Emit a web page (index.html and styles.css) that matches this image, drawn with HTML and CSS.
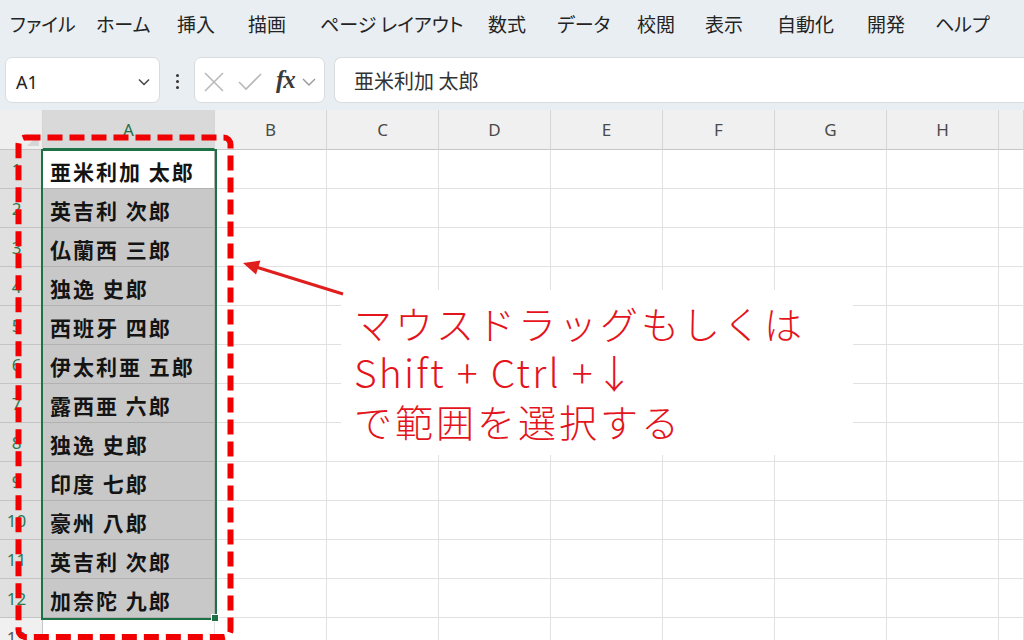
FILE: index.html
```html
<!DOCTYPE html>
<html lang="ja">
<head>
<meta charset="utf-8">
<title>Excel</title>
<link rel="stylesheet" href="styles.css">
</head>
<body>
<div class="app">
  <nav class="menu">
    <span class="m1">ファイル</span><span class="m2">ホーム</span><span class="m3">挿入</span><span class="m4">描画</span><span class="m5">ページ レイアウト</span><span class="m6">数式</span><span class="m7">データ</span><span class="m8">校閲</span><span class="m9">表示</span><span class="m10">自動化</span><span class="m11">開発</span><span>ヘルプ</span>
  </nav>
  <div class="fbar">
    <div class="namebox">
      <span class="nb-text">A1</span>
      <svg class="chev" width="12" height="8" viewBox="0 0 12 8"><path d="M1 1.5 L6 6.5 L11 1.5" fill="none" stroke="#444" stroke-width="1.5"/></svg>
    </div>
    <div class="dots"><i></i><i></i><i></i></div>
    <div class="fxbox">
      <svg width="22" height="22" viewBox="0 0 22 22"><path d="M2 2 L20 20 M20 2 L2 20" stroke="#b9b9b9" stroke-width="1.6" fill="none"/></svg>
      <svg width="26" height="22" viewBox="0 0 26 22"><path d="M2 11 L9 18 L24 3" stroke="#b9b9b9" stroke-width="1.6" fill="none"/></svg>
      <span class="fx">fx</span>
      <svg class="fxchev" width="14" height="8" viewBox="0 0 14 8"><path d="M1 1 L7 7 L13 1" fill="none" stroke="#999" stroke-width="1.4"/></svg>
    </div>
    <div class="finput">亜米利加 太郎</div>
  </div>
  <div class="sheet">
    <div class="grid">
      <div class="corner"><svg width="12" height="12" viewBox="0 0 12 12"><path d="M12 0 L12 12 L0 12 Z" fill="#d6d6d6"/></svg></div>
      <div class="ch sel">A</div><div class="ch">B</div><div class="ch">C</div><div class="ch">D</div><div class="ch">E</div><div class="ch">F</div><div class="ch">G</div><div class="ch">H</div><div class="ch"></div>

      <div class="rh sel">1</div><div class="c a active">亜米利加 太郎</div><div class="c"></div><div class="c"></div><div class="c"></div><div class="c"></div><div class="c"></div><div class="c"></div><div class="c"></div><div class="c"></div>
      <div class="rh sel">2</div><div class="c a">英吉利 次郎</div><div class="c"></div><div class="c"></div><div class="c"></div><div class="c"></div><div class="c"></div><div class="c"></div><div class="c"></div><div class="c"></div>
      <div class="rh sel">3</div><div class="c a">仏蘭西 三郎</div><div class="c"></div><div class="c"></div><div class="c"></div><div class="c"></div><div class="c"></div><div class="c"></div><div class="c"></div><div class="c"></div>
      <div class="rh sel">4</div><div class="c a">独逸 史郎</div><div class="c"></div><div class="c"></div><div class="c"></div><div class="c"></div><div class="c"></div><div class="c"></div><div class="c"></div><div class="c"></div>
      <div class="rh sel">5</div><div class="c a">西班牙 四郎</div><div class="c"></div><div class="c"></div><div class="c"></div><div class="c"></div><div class="c"></div><div class="c"></div><div class="c"></div><div class="c"></div>
      <div class="rh sel">6</div><div class="c a">伊太利亜 五郎</div><div class="c"></div><div class="c"></div><div class="c"></div><div class="c"></div><div class="c"></div><div class="c"></div><div class="c"></div><div class="c"></div>
      <div class="rh sel">7</div><div class="c a">露西亜 六郎</div><div class="c"></div><div class="c"></div><div class="c"></div><div class="c"></div><div class="c"></div><div class="c"></div><div class="c"></div><div class="c"></div>
      <div class="rh sel">8</div><div class="c a">独逸 史郎</div><div class="c"></div><div class="c"></div><div class="c"></div><div class="c"></div><div class="c"></div><div class="c"></div><div class="c"></div><div class="c"></div>
      <div class="rh sel">9</div><div class="c a">印度 七郎</div><div class="c"></div><div class="c"></div><div class="c"></div><div class="c"></div><div class="c"></div><div class="c"></div><div class="c"></div><div class="c"></div>
      <div class="rh sel">10</div><div class="c a">豪州 八郎</div><div class="c"></div><div class="c"></div><div class="c"></div><div class="c"></div><div class="c"></div><div class="c"></div><div class="c"></div><div class="c"></div>
      <div class="rh sel">11</div><div class="c a">英吉利 次郎</div><div class="c"></div><div class="c"></div><div class="c"></div><div class="c"></div><div class="c"></div><div class="c"></div><div class="c"></div><div class="c"></div>
      <div class="rh sel">12</div><div class="c a">加奈陀 九郎</div><div class="c"></div><div class="c"></div><div class="c"></div><div class="c"></div><div class="c"></div><div class="c"></div><div class="c"></div><div class="c"></div>
      <div class="rh">13</div><div class="c"></div><div class="c"></div><div class="c"></div><div class="c"></div><div class="c"></div><div class="c"></div><div class="c"></div><div class="c"></div><div class="c"></div>
    </div>
    <div class="selection"></div>
    <div class="handle"></div>
  </div>
  <div class="note">
    <div class="nl">マウスドラッグもしくは</div>
    <div class="nl lat">Shift + Ctrl +↓</div>
    <div class="nl">で範囲を選択する</div>
  </div>
  <svg class="marks" width="1024" height="640" viewBox="0 0 1024 640">
    <rect x="18.5" y="137.5" width="212" height="499.5" rx="7" fill="none" stroke="#f00000" stroke-width="6" stroke-dasharray="15 7"/>
    <line x1="343" y1="294" x2="256" y2="267" stroke="#e01e1e" stroke-width="3"/>
    <polygon points="243,263 260.5,260.5 256,274.5" fill="#e01e1e"/>
  </svg>
</div>
</body>
</html>
```
FILE: styles.css
```css
html, body {
  margin: 0;
  padding: 0;
}
body {
  width: 1024px;
  height: 640px;
  overflow: hidden;
  background: #e9eef2;
  font-family: "Noto Sans CJK JP", "Noto Sans", sans-serif;
}
.app {
  position: relative;
  width: 1024px;
  height: 640px;
  overflow: hidden;
}
.menu {
  height: 46px;
  display: flex;
  align-items: center;
  padding-left: 10px;
  font-size: 19px;
  color: #242424;
  font-feature-settings: "palt";
  white-space: nowrap;
}
.menu span { flex: none; }
.menu .m1 { width: 86px; }
.menu .m2 { width: 81px; }
.menu .m3 { width: 71px; }
.menu .m4 { width: 72px; }
.menu .m5 { width: 168px; }
.menu .m6 { width: 69px; }
.menu .m7 { width: 80px; }
.menu .m8 { width: 68px; }
.menu .m9 { width: 72px; }
.menu .m10 { width: 90px; }
.menu .m11 { width: 68px; }
.fbar {
  margin-top: 11px;
  height: 46px;
  display: flex;
  align-items: stretch;
  padding-left: 5px;
}
.namebox {
  width: 155px;
  box-sizing: border-box;
  background: #fff;
  border: 1px solid #d8dcdf;
  border-radius: 7px;
  display: flex;
  align-items: center;
  justify-content: space-between;
  padding: 0 9px 0 10px;
}
.nb-text {
  font-family: "Noto Sans", sans-serif;
  font-size: 18px;
  color: #222;
  padding-top: 4px;
}
.chev {
  margin-top: 4px;
}
.dots {
  width: 34px;
  display: flex;
  flex-direction: column;
  align-items: center;
  justify-content: center;
  gap: 3px;
  padding-top: 2px;
}
.dots i {
  width: 3px;
  height: 3px;
  background: #333;
  border-radius: 50%;
}
.fxbox {
  width: 131px;
  box-sizing: border-box;
  background: #fff;
  border: 1px solid #d8dcdf;
  border-radius: 7px;
  display: flex;
  align-items: center;
  padding: 4px 0 0 8px;
  gap: 0;
}
.fxbox svg:nth-child(2) {
  margin-left: 12px;
}
.fx {
  font-family: "Liberation Serif", serif;
  font-style: italic;
  font-weight: bold;
  font-size: 25px;
  color: #3a3a3a;
  margin-left: 13px;
  letter-spacing: -1px;
  margin-top: -4px;
}
.fxchev {
  margin-left: 7px;
}
.finput {
  margin-left: 9px;
  flex: 1;
  background: #fff;
  border: 1px solid #d8dcdf;
  border-right: none;
  border-radius: 7px 0 0 7px;
  display: flex;
  align-items: center;
  padding-left: 19px;
  font-size: 20px;
  color: #333;
  padding-top: 1px;
}
.sheet {
  position: absolute;
  left: 0;
  top: 110px;
  width: 1024px;
  height: 530px;
  overflow: hidden;
  background: #fff;
}
.grid {
  display: grid;
  grid-template-columns: 43px 172px repeat(7, 112px) 25px;
  grid-template-rows: 40px repeat(13, 39px);
}
.corner {
  background: #efefef;
  border-right: 1px solid #d4d4d4;
  border-bottom: 1px solid #c6c6c6;
  box-sizing: border-box;
  display: flex;
  align-items: flex-end;
  justify-content: flex-end;
  padding: 0 3px 3px 0;
}
.ch {
  background: #f0f0f0;
  border-right: 1px solid #d6d6d6;
  border-bottom: 1px solid #c6c6c6;
  box-sizing: border-box;
  display: flex;
  align-items: center;
  justify-content: center;
  font-family: "Noto Sans", sans-serif;
  font-size: 17px;
  color: #4a4a4a;
}
.ch.sel {
  background: #d9d9d9;
  color: #1e7145;
  border-bottom: 2px solid #1e7145;
}
.rh {
  background: #f0f0f0;
  border-right: 1px solid #c6c6c6;
  border-bottom: 1px solid #d6d6d6;
  box-sizing: border-box;
  display: flex;
  align-items: center;
  justify-content: center;
  padding-right: 9px;
  font-family: "Noto Sans", sans-serif;
  font-size: 17px;
  color: #555;
}
.rh.sel {
  background: #e0e0e0;
  color: #2b7a50;
  border-bottom: 1px solid #c4c4c4;
}
.c {
  border-right: 1px solid #e1e1e1;
  border-bottom: 1px solid #e1e1e1;
  box-sizing: border-box;
}
.c.a {
  background: #c8c8c8;
  border-bottom: 1px solid #b2b2b2;
  border-right: 1px solid #b2b2b2;
  display: flex;
  align-items: center;
  padding: 3px 0 0 7px;
  font-weight: bold;
  font-size: 21px;
  letter-spacing: 2px;
  color: #141414;
  white-space: nowrap;
}
.c.a.active {
  background: #fff;
}
.selection {
  position: absolute;
  left: 41px;
  top: 39px;
  width: 176px;
  height: 471px;
  box-sizing: border-box;
  border: 2px solid #1e7145;
}
.handle {
  position: absolute;
  left: 211px;
  top: 504px;
  width: 8px;
  height: 8px;
  box-sizing: border-box;
  background: #1e7145;
  border: 1px solid #fff;
}
.note {
  position: absolute;
  left: 341px;
  top: 290px;
  width: 512px;
  height: 165px;
  box-sizing: border-box;
  background: #fff;
  padding: 8px 0 0 13px;
  font-size: 38px;
  font-weight: 300;
  letter-spacing: 3px;
  color: #e3141c;
  white-space: nowrap;
}
.nl {
  height: 49px;
  line-height: 49px;
}
.nl.lat {
  font-size: 39px;
  letter-spacing: 2.2px;
}
.marks {
  position: absolute;
  left: 0;
  top: 0;
  pointer-events: none;
}
```
